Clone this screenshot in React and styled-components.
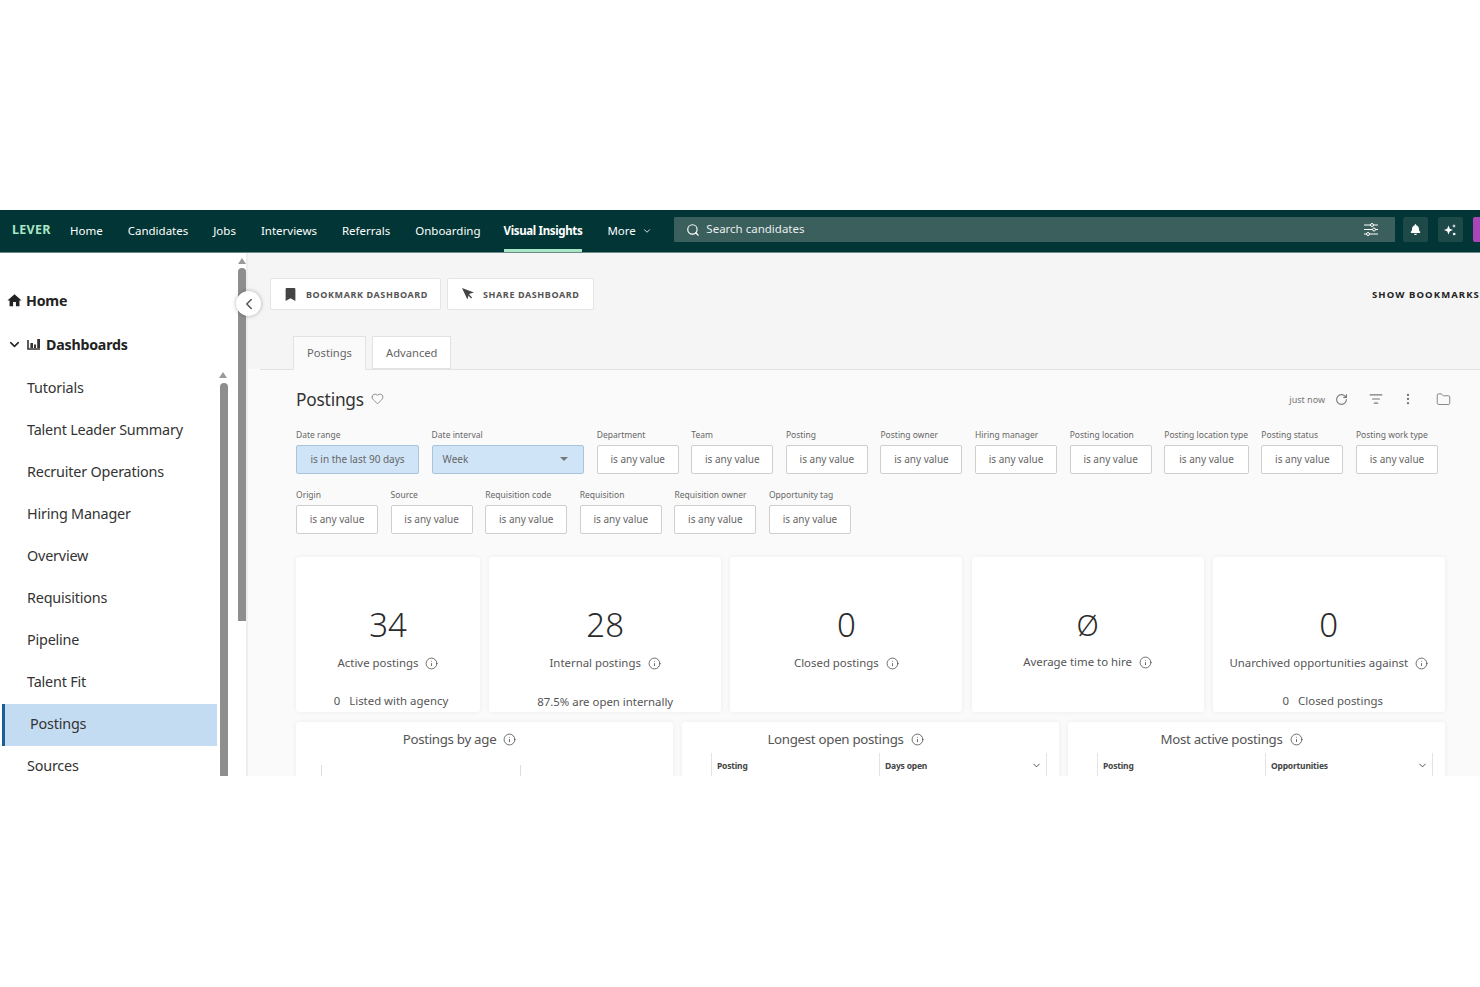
import React from "react";
import styled, { createGlobalStyle } from "styled-components";
import { Search, ChevronDown, ChevronLeft, Info, Heart, RotateCw, ListFilter, EllipsisVertical, Folder } from "lucide-react";
import { FaBookmark, FaBell } from "react-icons/fa";
import { MdHome } from "react-icons/md";

const Global = createGlobalStyle`
  html, body { margin: 0; padding: 0; background: #fff; }
  body { font-family: "Noto Sans", "Open Sans", sans-serif; color: #333; }
  * { box-sizing: border-box; }
`;
const Page = styled.div`width: 1480px; height: 987px; padding-top: 210px; overflow: hidden; background: #fff;`;
const Frame = styled.div`height: 566px; display: flex; flex-direction: column; overflow: hidden; position: relative;`;

const Nav = styled.header`height: 43px; flex: none; background: #023535; border-bottom: 1px solid #6b8a87; display: flex; align-items: center; padding: 0 0 3px 12px;`;
const Logo = styled.div`color: #a9e6c6; font-weight: 700; font-size: 12.5px; letter-spacing: .3px; width: 58px; margin-top: -1px;`;
const NavItems = styled.nav`display: flex; gap: 25px; height: 42px; align-self: flex-start; margin-bottom: -3px;`;
const NavItem = styled.a`
  font-size: 11.5px; color: #fff; display: flex; align-items: center; gap: 6px; height: 100%; white-space: nowrap;
  padding-top: 2px;
  margin-left: ${p => p.$active ? "-2px" : "0"};
  border-bottom: 3px solid ${p => p.$active ? "#a9e6c6" : "transparent"};
  font-weight: ${p => p.$active ? 700 : 400}; letter-spacing: ${p => p.$active ? "-.35px" : "0"};
`;
const SearchBox = styled.div`margin-left: 22.5px; width: 721px; height: 25px; background: #3a5f5c; border-radius: 1px; display: flex; align-items: center; color: #fff; font-size: 11.5px; padding: 0 17px 0 12px; gap: 6px;`;
const SearchText = styled.span`flex: 1; color: #e8eeee; margin-top: -2px;`;
const IconBtn = styled.div`width: 25px; height: 25px; background: #1d4a49; border-radius: 2px; display: flex; align-items: center; justify-content: center; color: #fff; margin-left: ${p => p.$ml}px;`;
const Purple = styled.div`width: 7px; height: 25px; background: #a845b8; border-radius: 2px 0 0 2px; margin-left: 10px;`;

const Body = styled.div`flex: 1; display: flex; min-height: 0;`;
const Sidebar = styled.aside`width: 248px; flex: none; background: #fff; border-right: 2px solid #eee; position: relative; overflow: hidden; padding-top: 35px;`;
const Top = styled.div`font-size: 14.2px; font-weight: 700; color: #222; display: flex; align-items: center; gap: ${p => p.$gap}px; height: 24px; margin: 0 0 ${p => p.$mb}px ${p => p.$ml}px; letter-spacing: -.2px;`;
const SideList = styled.ul`list-style: none; margin: 0; padding: 0 0 0 2px; width: 217px;`;
const SideItem = styled.li`
  height: 42px; display: flex; align-items: center; font-size: 14.4px; color: #333; letter-spacing: -.2px;
  padding: 0 0 3px 25px;
  background: ${p => p.$active ? "#c4dcf2" : "transparent"};
  border-left: ${p => p.$active ? "3px solid #1c5f92" : "0"};
`;
const Track = styled.div`position: absolute; width: 8px; left: ${p => p.$x}px; top: ${p => p.$top}px; height: ${p => p.$h}px; background: #8e8e8e; border-radius: 4px 4px 0 0;`;
const Arrow = styled.div`position: absolute; left: ${p => p.$x}px; top: ${p => p.$top}px; width: 0; height: 0; border-left: 4px solid transparent; border-right: 4px solid transparent; border-bottom: 6px solid #9a9a9a;`;
const Collapse = styled.button`position: absolute; left: 236px; top: 81px; width: 25px; height: 25px; border-radius: 50%; background: #fff; border: 0; padding: 0; box-shadow: 0 0 4px rgba(0,0,0,.3); display: flex; align-items: center; justify-content: center; color: #555; z-index: 3;`;

const Main = styled.main`flex: 1; min-width: 0; background: #fafafa; display: flex; flex-direction: column;`;
const Head = styled.div`height: 117px; flex: none; background: #f5f5f5; position: relative; border-bottom: 1px solid #e2e2e2; margin-left: 12px; padding-left: 10px;`;
const HeadBg = styled.div`position: absolute; left: -12px; top: 0; width: 12px; height: 100%; background: #f5f5f5;`;
const ToolRow = styled.div`display: flex; gap: 6px; padding-top: 25px; align-items: center;`;
const ToolBtn = styled.button`height: 32px; width: ${p => p.$w}px; background: #fff; border: 1px solid #e4e4e4; border-radius: 2px; display: flex; align-items: center; gap: ${p => p.$gap}px; padding: 0 0 0 13px; font: 700 9px "Noto Sans", sans-serif; letter-spacing: .6px; color: #555; white-space: nowrap;`;
const ShowBookmarks = styled.div`position: absolute; left: 1112px; top: 35px; font-size: 9.5px; font-weight: 700; letter-spacing: 1.1px; color: #222; white-space: nowrap;`;
const Tabs = styled.div`display: flex; gap: 6px; position: absolute; left: 33px; bottom: -1px;`;
const Tab = styled.div`height: ${p => p.$active ? 34 : 33}px; padding: 0 13px ${p => p.$active ? 2 : 0}px; font-size: 11.2px; color: #666; background: ${p => p.$active ? "#fafafa" : "#fff"}; border: 1px solid #e2e2e2; border-bottom-color: ${p => p.$active ? "#fafafa" : "#e2e2e2"}; display: flex; align-items: center; margin-bottom: ${p => p.$active ? 0 : 1}px;`;

const Content = styled.div`padding: 16px 35px 0 48px;`;
const TitleRow = styled.div`display: flex; align-items: center; height: 26px;`;
const Title = styled.h1`margin: 0; font-size: 17.3px; font-weight: 400; color: #333; letter-spacing: -.2px;`;
const Tools = styled.div`margin-left: auto; display: flex; align-items: center; color: #777; margin-right: -6px;`;
const JustNow = styled.span`font-size: 9px; color: #777; margin-right: 10px;`;
const ToolIcon = styled.span`display: flex; margin-left: ${p => p.$ml || 0}px; margin-top: ${p => p.$mt || 0}px;`;

const FilterRow = styled.div`display: flex; column-gap: 12.6px; margin-top: ${p => p.$mt}px;`;
const Field = styled.div`width: ${p => p.$w}px; display: flex; flex-direction: column; flex: none;`;
const FieldLabel = styled.label`font-size: 8.5px; color: #666; height: 16px; line-height: 12px; white-space: nowrap;`;
const Control = styled.div`
  height: 29px; border: 1px solid ${p => p.$on ? "#a9c5dc" : "#cfcfcf"}; border-radius: 2px;
  background: ${p => p.$on ? "#cfe5f7" : "#fff"}; color: #666; font-size: 10px;
  display: flex; align-items: center; justify-content: ${p => p.$select ? "space-between" : "center"};
  padding: ${p => p.$select ? "0 15px 1px 10px" : "0 0 1px"}; white-space: nowrap;
`;
const Caret = styled.span`width: 0; height: 0; border-left: 4px solid transparent; border-right: 4px solid transparent; border-top: 4px solid #777;`;

const Cards = styled.div`display: grid; grid-template-columns: 184px repeat(4, 232px); column-gap: 9.2px; margin-top: 23px;`;
const Card = styled.section`height: 155px; background: #fff; border-radius: 3px; box-shadow: 0 0 5px rgba(0,0,0,.06); display: flex; flex-direction: column; align-items: center; padding-top: 45px; position: relative;`;
const Big = styled.div`font-size: ${p => p.$size || 33}px; line-height: 46px; color: #2b2b2b; font-weight: 300;`;
const Label = styled.div`font-size: 11.4px; color: #555; display: flex; align-items: center; gap: 7px; line-height: 18px; margin-top: ${p => p.$mt ?? 6}px; white-space: nowrap;`;
const Sub = styled.div`font-size: 11.4px; color: #555; position: absolute; bottom: ${p => p.$b ?? 2}px; padding-left: ${p => p.$pl || 0}px; white-space: nowrap;`;
const Wide = styled.div`display: grid; grid-template-columns: repeat(3, 377px); column-gap: 9px; margin-top: 10px;`;
const Panel = styled.section`height: 90px; background: #fff; border-radius: 3px; box-shadow: 0 0 5px rgba(0,0,0,.06); padding: 8px 12px 0 29px; display: flex; flex-direction: column; align-items: center; position: relative;`;
const PanelTitle = styled.div`font-size: 13.3px; color: #555; display: flex; align-items: center; gap: 7px; line-height: 18px; white-space: nowrap; letter-spacing: -.3px; padding-right: 67px;`;
const TableHead = styled.div`margin-top: 5px; width: 100%; height: 24px; display: grid; grid-template-columns: 167px 1fr; border-left: 1px solid #e4e4e4; border-right: 1px solid #e4e4e4; font-size: 8.5px; font-weight: 700; color: #444; letter-spacing: -.2px;`;
const Th = styled.div`padding-left: 5px; display: flex; align-items: center; justify-content: space-between; padding-right: 4px; border-left: ${p => p.$b ? "1px solid #e4e4e4" : "0"};`;
const ChartAxis = styled.div`margin: 17px 0 0 -4px; align-self: flex-start; width: 200px; height: 24px; border-left: 1px solid #ddd; border-right: 1px solid #ddd;`;
const SubCount = styled.span`margin-right: 9px;`;

const I = () => <Info size={13} strokeWidth={1.4} color="#444" />;
const Plane = () => (
  <svg width="14" height="14" viewBox="0 0 14 14"><path d="M1 1l12 4.5-5 1.6-1.6 5.4z" fill="#444" /><path d="M7 7l3.5 4" stroke="#444" strokeWidth="1.4" /></svg>
);
const Bars = () => (
  <svg width="14" height="12" viewBox="0 0 14 12"><path d="M1 2v9h12" stroke="#333" strokeWidth="1.6" fill="none" /><rect x="3.4" y="5" width="2.6" height="5" fill="#333" /><rect x="7" y="6.5" width="2" height="3.5" fill="#333" /><rect x="10.2" y="1" width="2.8" height="9" fill="#333" /></svg>
);
const Tuning = () => (
  <svg width="15" height="13" viewBox="0 0 15 13" fill="none" stroke="#fff" strokeWidth="1">
    <path d="M1 2h14M1 6.5h14M1 11h14" />
    <circle cx="9" cy="2" r="1.5" fill="#3a5f5c" /><circle cx="11" cy="6.5" r="1.5" fill="#3a5f5c" /><circle cx="5" cy="11" r="1.5" fill="#3a5f5c" />
  </svg>
);
const Spark = () => (
  <svg width="14" height="14" viewBox="0 0 14 14" fill="#fff">
    <path d="M5.5 2.5l1.3 3.2L10 7l-3.2 1.3L5.5 11.5 4.2 8.3 1 7l3.2-1.3z" />
    <path d="M11 1l.6 1.4L13 3l-1.4.6L11 5l-.6-1.4L9 3l1.4-.6z" />
    <circle cx="11.2" cy="11" r="1.3" />
  </svg>
);

const navItems = ["Home", "Candidates", "Jobs", "Interviews", "Referrals", "Onboarding"];
const sideItems = ["Tutorials", "Talent Leader Summary", "Recruiter Operations", "Hiring Manager", "Overview", "Requisitions", "Pipeline", "Talent Fit", "Postings", "Sources"];
const row1 = [["Department", 82], ["Team", 82], ["Posting", 82], ["Posting owner", 82], ["Hiring manager", 82], ["Posting location", 82], ["Posting location type", 84.5], ["Posting status", 82]];
const row2 = ["Origin", "Source", "Requisition code", "Requisition", "Requisition owner", "Opportunity tag"];

export default function App() {
  return (
    <Page>
      <Global />
      <Frame>
        <Nav>
          <Logo>LEVER</Logo>
          <NavItems>
            {navItems.map(n => <NavItem key={n}>{n}</NavItem>)}
            <NavItem $active>Visual Insights</NavItem>
            <NavItem>More <ChevronDown size={10} /></NavItem>
          </NavItems>
          <SearchBox>
            <Search size={14} />
            <SearchText>Search candidates</SearchText>
            <Tuning />
          </SearchBox>
          <IconBtn $ml={8}><FaBell size={11} /></IconBtn>
          <IconBtn $ml={10}><Spark /></IconBtn>
          <Purple />
        </Nav>
        <Body>
          <Sidebar>
            <Top $gap={3} $mb={20} $ml={6}><MdHome size={17} />Home</Top>
            <Top $gap={5} $mb={12} $ml={7}><ChevronDown size={15} strokeWidth={2.4} /><Bars />Dashboards</Top>
            <SideList>
              {sideItems.map(s => <SideItem key={s} $active={s === "Postings"}>{s}</SideItem>)}
            </SideList>
            <Arrow $x={238} $top={5} />
            <Track $x={238} $top={15} $h={353} />
            <Arrow $x={219} $top={119} />
            <Track $x={220} $top={130} $h={400} />
          </Sidebar>
          <Collapse><ChevronLeft size={18} /></Collapse>
          <Main>
            <Head>
              <HeadBg />
              <ToolRow>
                <ToolBtn $w={171} $gap={9}><FaBookmark size={13} color="#444" />BOOKMARK DASHBOARD</ToolBtn>
                <ToolBtn $w={147} $gap={8}><Plane />SHARE DASHBOARD</ToolBtn>
              </ToolRow>
              <ShowBookmarks>SHOW BOOKMARKS</ShowBookmarks>
              <Tabs>
                <Tab $active>Postings</Tab>
                <Tab>Advanced</Tab>
              </Tabs>
            </Head>
            <Content>
              <TitleRow>
                <Title>Postings</Title>
                <ToolIcon $ml={7} $mt={-2}><Heart size={13} strokeWidth={1.3} color="#666" /></ToolIcon>
                <Tools>
                  <JustNow>just now</JustNow>
                  <ToolIcon><RotateCw size={13} /></ToolIcon>
                  <ToolIcon $ml={21}><ListFilter size={14} /></ToolIcon>
                  <ToolIcon $ml={18}><EllipsisVertical size={14} /></ToolIcon>
                  <ToolIcon $ml={21}><Folder size={15} strokeWidth={1.4} /></ToolIcon>
                </Tools>
              </TitleRow>
              <FilterRow $mt={17}>
                <Field $w={123}><FieldLabel>Date range</FieldLabel><Control $on>is in the last 90 days</Control></Field>
                <Field $w={152.5}><FieldLabel>Date interval</FieldLabel><Control $on $select>Week<Caret /></Control></Field>
                {row1.map(([l, w]) => <Field key={l} $w={w}><FieldLabel>{l}</FieldLabel><Control>is any value</Control></Field>)}
                <Field $w={82}><FieldLabel>Posting work type</FieldLabel><Control>is any value</Control></Field>
              </FilterRow>
              <FilterRow $mt={15}>
                {row2.map(l => <Field key={l} $w={82}><FieldLabel>{l}</FieldLabel><Control>is any value</Control></Field>)}
              </FilterRow>
              <Cards>
                <Card><Big>34</Big><Label>Active postings <I /></Label><Sub $b={4} $pl={6}><SubCount>0</SubCount>Listed with agency</Sub></Card>
                <Card><Big>28</Big><Label>Internal postings <I /></Label><Sub $b={3}>87.5% are open internally</Sub></Card>
                <Card><Big>0</Big><Label>Closed postings <I /></Label></Card>
                <Card><Big $size={29}>Ø</Big><Label $mt={5}>Average time to hire <I /></Label></Card>
                <Card><Big>0</Big><Label>Unarchived opportunities against <I /></Label><Sub $b={4} $pl={8}><SubCount>0</SubCount>Closed postings</Sub></Card>
              </Cards>
              <Wide>
                <Panel><PanelTitle>Postings by age <I /></PanelTitle><ChartAxis /></Panel>
                <Panel><PanelTitle>Longest open postings <I /></PanelTitle><TableHead><Th>Posting</Th><Th $b>Days open<ChevronDown size={11} /></Th></TableHead></Panel>
                <Panel><PanelTitle>Most active postings <I /></PanelTitle><TableHead><Th>Posting</Th><Th $b>Opportunities<ChevronDown size={11} /></Th></TableHead></Panel>
              </Wide>
            </Content>
          </Main>
        </Body>
      </Frame>
    </Page>
  );
}
